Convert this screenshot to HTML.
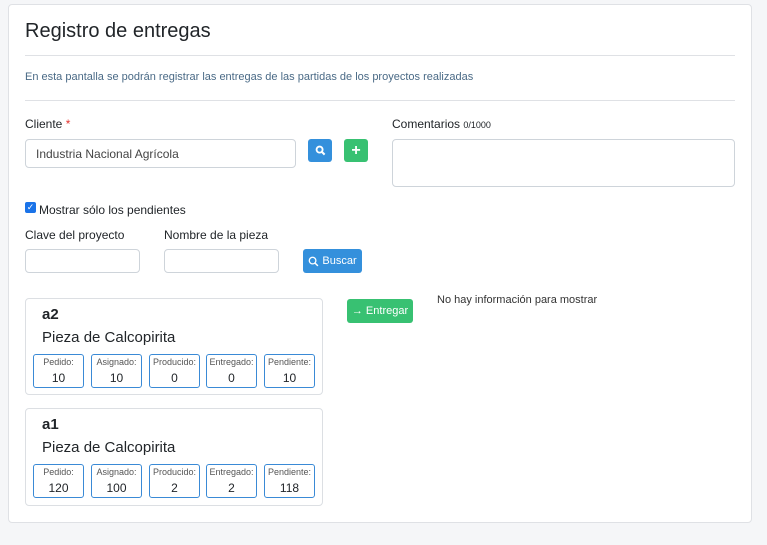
<!DOCTYPE html>
<html><head><meta charset="utf-8"><style>
*{box-sizing:border-box;margin:0;padding:0}
body{width:767px;height:545px;background:#f5f6f8;font-family:"Liberation Sans",sans-serif;color:#212529;position:relative;overflow:hidden}
.a{position:absolute}
.main{left:8px;top:4px;width:744px;height:519px;background:#fff;border:1px solid #dfe1e5;border-radius:4px}
.inp{background:#fff;border:1px solid #ced4da;border-radius:4px}
.lbl{font-size:12px;color:#212529}
.btn{border-radius:3px;color:#fff;font-size:11px;display:flex;align-items:center;justify-content:center;gap:3px}
.card{border:1px solid #dcdfe3;border-radius:4px;background:#fff}
.box{position:absolute;top:55px;width:51px;height:34px;border:1px solid #3a8ad6;border-radius:3px;text-align:center}
.box .t{font-size:9px;color:#555;margin-top:2px}
.box .v{font-size:12px;margin-top:4px}
</style></head><body>
<div class="a main"></div>
<div class="a" style="left:25px;top:20px;font-size:20px;color:#212529">Registro de entregas</div>
<div class="a" style="left:25px;top:55px;width:710px;border-top:1px solid #dfe1e5"></div>
<div class="a" style="left:25px;top:71px;font-size:11px;color:#4a6a86">En esta pantalla se podrán registrar las entregas de las partidas de los proyectos realizadas</div>
<div class="a" style="left:25px;top:100px;width:710px;border-top:1px solid #dfe1e5"></div>
<div class="a lbl" style="left:25px;top:117px">Cliente <span style="color:#e3342f">*</span></div>
<div class="a inp" style="left:25px;top:139px;width:271px;height:29px;font-size:12px;color:#444;padding:7px 10px">Industria Nacional Agrícola</div>
<div class="a btn" style="left:308px;top:139px;width:24px;height:23px;background:#3490dc"><svg width="11" height="11" viewBox="0 0 12 12"><circle cx="5" cy="5" r="3.3" fill="none" stroke="#fff" stroke-width="2"/><path d="M7.5 7.5L10.5 10.5" stroke="#fff" stroke-width="2.2"/></svg></div>
<div class="a btn" style="left:344px;top:139px;width:24px;height:23px;background:#38c172;font-size:16px;font-weight:bold">+</div>
<div class="a lbl" style="left:392px;top:117px">Comentarios <span style="font-size:9px">0/1000</span></div>
<div class="a inp" style="left:392px;top:139px;width:343px;height:48px"></div>
<div class="a" style="left:25px;top:202px;width:11px;height:11px;background:#1a73e8;border-radius:2px;color:#fff;font-size:9px;line-height:11px;text-align:center">✓</div>
<div class="a lbl" style="left:39px;top:203px">Mostrar sólo los pendientes</div>
<div class="a lbl" style="left:25px;top:228px">Clave del proyecto</div>
<div class="a lbl" style="left:164px;top:228px">Nombre de la pieza</div>
<div class="a inp" style="left:25px;top:249px;width:115px;height:24px"></div>
<div class="a inp" style="left:164px;top:249px;width:115px;height:24px"></div>
<div class="a btn" style="left:303px;top:249px;width:59px;height:24px;background:#3490dc"><svg width="11" height="11" viewBox="0 0 12 12"><circle cx="5" cy="5" r="3.6" fill="none" stroke="#fff" stroke-width="1.4"/><path d="M7.6 7.6L10.8 10.8" stroke="#fff" stroke-width="1.6"/></svg>Buscar</div>
<div class="a btn" style="left:347px;top:299px;width:66px;height:24px;background:#38c172">→ Entregar</div>
<div class="a" style="left:437px;top:294px;font-size:11px;color:#333">No hay información para mostrar</div>

<div class="a card" style="left:25px;top:298px;width:298px;height:97px">
<div class="a" style="left:16px;top:7px;font-size:15px;font-weight:bold">a2</div>
<div class="a" style="left:16px;top:30px;font-size:15px">Pieza de Calcopirita</div>
<div class="box" style="left:7px"><div class="t">Pedido:</div><div class="v">10</div></div>
<div class="box" style="left:65px"><div class="t">Asignado:</div><div class="v">10</div></div>
<div class="box" style="left:123px"><div class="t">Producido:</div><div class="v">0</div></div>
<div class="box" style="left:180px"><div class="t">Entregado:</div><div class="v">0</div></div>
<div class="box" style="left:238px"><div class="t">Pendiente:</div><div class="v">10</div></div>
</div>
<div class="a card" style="left:25px;top:408px;width:298px;height:98px">
<div class="a" style="left:16px;top:7px;font-size:15px;font-weight:bold">a1</div>
<div class="a" style="left:16px;top:30px;font-size:15px">Pieza de Calcopirita</div>
<div class="box" style="left:7px"><div class="t">Pedido:</div><div class="v">120</div></div>
<div class="box" style="left:65px"><div class="t">Asignado:</div><div class="v">100</div></div>
<div class="box" style="left:123px"><div class="t">Producido:</div><div class="v">2</div></div>
<div class="box" style="left:180px"><div class="t">Entregado:</div><div class="v">2</div></div>
<div class="box" style="left:238px"><div class="t">Pendiente:</div><div class="v">118</div></div>
</div>
</body></html>
